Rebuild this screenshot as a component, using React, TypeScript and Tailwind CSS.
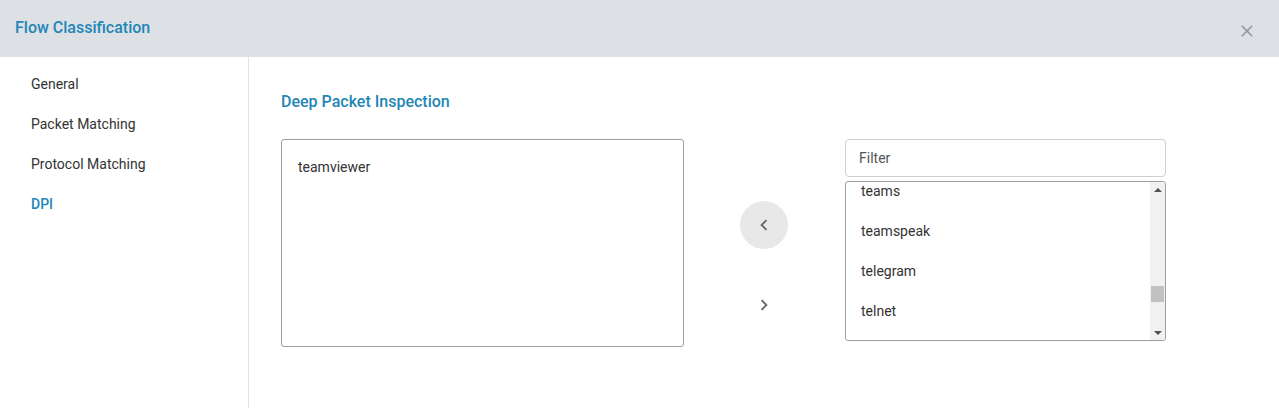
import React, { useEffect, useRef } from 'react';
import { MdChevronLeft, MdChevronRight, MdClose } from 'react-icons/md';

const navItems = ['General', 'Packet Matching', 'Protocol Matching', 'DPI'];

const available = [
  'slack', 'smb', 'smtp', 'snmp', 'soundcloud', 'spotify', 'ssdp', 'ssh',
  'ssl', 'steam', 'stun', 'syslog', 'tango', 'targus', 'tcp', 'tds',
  'teamspeak3', 'teamcity', 'teamdrive', 'teamfortress', 'teamlink', 'teamplay',
  'teams', 'teamspeak', 'telegram', 'telnet', 'teredo', 'tftp', 'threema',
  'tiktok', 'tinc', 'tor',
];

export default function App() {
  const listRef = useRef<HTMLDivElement>(null);

  useEffect(() => {
    if (listRef.current) {
      listRef.current.scrollTop = 22 * 40 + 11;
    }
  }, []);

  return (
    <div
      className="w-[1279px] h-[408px] flex flex-col bg-white text-[#333]"
      style={{ fontFamily: 'Roboto, "Liberation Sans", sans-serif' }}
    >
      <div className="h-[57px] shrink-0 bg-[#dde1e5] flex items-center justify-between pl-[15px] pr-[22px]">
        <span className="text-[16px] font-medium text-[#1f86b5] pb-[2px]">Flow Classification</span>
        <MdClose size={20} className="text-[#9a9a9a] mt-[5px]" />
      </div>
      <div className="flex-1 flex min-h-0">
        <div className="w-[249px] shrink-0 border-r border-[#e3e3e3] pt-[7px] px-[31px]">
          {navItems.map((item) => (
            <div
              key={item}
              className={`h-10 flex items-center text-[14px] ${
                item === 'DPI' ? 'text-[#1f86b5] font-medium' : 'text-[#333]'
              }`}
            >
              {item}
            </div>
          ))}
        </div>
        <div className="flex-1 pl-[32px] pt-[35px]">
          <div className="text-[16px] leading-5 font-medium text-[#1f86b5]">Deep Packet Inspection</div>
          <div className="flex mt-[27px]">
            <div className="w-[403px] h-[208px] border border-[#9e9e9e] rounded-[3px] pt-[17px] px-[16px] text-[14px]">
              teamviewer
            </div>
            <div className="w-[161px] flex flex-col items-center pt-[62px] pr-[2px] gap-[32px]">
              <button className="w-12 h-12 rounded-full bg-[#e8e8e8] flex items-center justify-center text-[#666]">
                <MdChevronLeft size={22} />
              </button>
              <button className="w-12 h-12 rounded-full flex items-center justify-center text-[#666]">
                <MdChevronRight size={22} />
              </button>
            </div>
            <div className="w-[321px] flex flex-col gap-[4px]">
              <input
                className="h-[38px] border border-[#cfcfcf] rounded-[4px] px-[13px] text-[14px] outline-none placeholder:text-[#555]"
                placeholder="Filter"
              />
              <div className="h-[160px] border border-[#9e9e9e] rounded-[3px] flex overflow-hidden">
                <div ref={listRef} className="flex-1 overflow-hidden">
                  {available.map((p) => (
                    <div key={p} className="h-10 flex items-center px-[15px] text-[14px]">
                      {p}
                    </div>
                  ))}
                </div>
                <div className="w-[15px] bg-[#f1f1f1] flex flex-col">
                  <div className="h-[15px] flex items-center justify-center">
                    <div className="w-0 h-0 border-l-[4px] border-r-[4px] border-b-[4px] border-l-transparent border-r-transparent border-b-[#505050]" />
                  </div>
                  <div className="flex-1 pt-[89px]">
                    <div className="h-[16px] mx-[1px] bg-[#c1c1c1]" />
                  </div>
                  <div className="h-[15px] flex items-center justify-center">
                    <div className="w-0 h-0 border-l-[4px] border-r-[4px] border-t-[4px] border-l-transparent border-r-transparent border-t-[#505050]" />
                  </div>
                </div>
              </div>
            </div>
          </div>
        </div>
      </div>
    </div>
  );
}
